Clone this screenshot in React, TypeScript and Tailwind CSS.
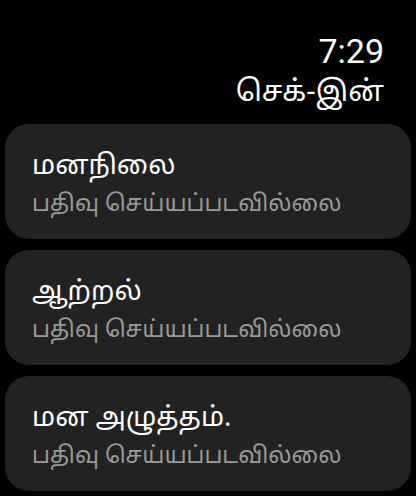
const rows = [
  { title: 'மனநிலை', status: 'பதிவு செய்யப்படவில்லை' },
  { title: 'ஆற்றல்', status: 'பதிவு செய்யப்படவில்லை' },
  { title: 'மன அழுத்தம்.', status: 'பதிவு செய்யப்படவில்லை' },
];

export default function App() {
  return (
    <div
      className="flex h-[496px] w-[416px] flex-col overflow-hidden bg-black text-white"
      style={{ fontFamily: '"Noto Sans", "Noto Sans Tamil", "Liberation Sans", sans-serif' }}
    >
      <header className="flex flex-col items-end pr-[32px] pt-[33px]">
        <span className="text-[34px] leading-[36px]" style={{ fontFamily: 'Roboto, sans-serif' }}>
          7:29
        </span>
        <h1 className="mt-[1px] text-[29px] leading-[40px]">செக்-இன்</h1>
      </header>
      <div className="mt-[14px] flex flex-col gap-[11px] px-[5px]">
        {rows.map((row) => (
          <div
            key={row.title}
            className="flex h-[115px] flex-col rounded-[24px] bg-[#222222] pl-[27px] pt-[21px]"
          >
            <span className="text-[27px] leading-[38px]">{row.title}</span>
            <span className="text-[23px] leading-[39px] text-[#9a9a9a]">{row.status}</span>
          </div>
        ))}
      </div>
    </div>
  );
}
